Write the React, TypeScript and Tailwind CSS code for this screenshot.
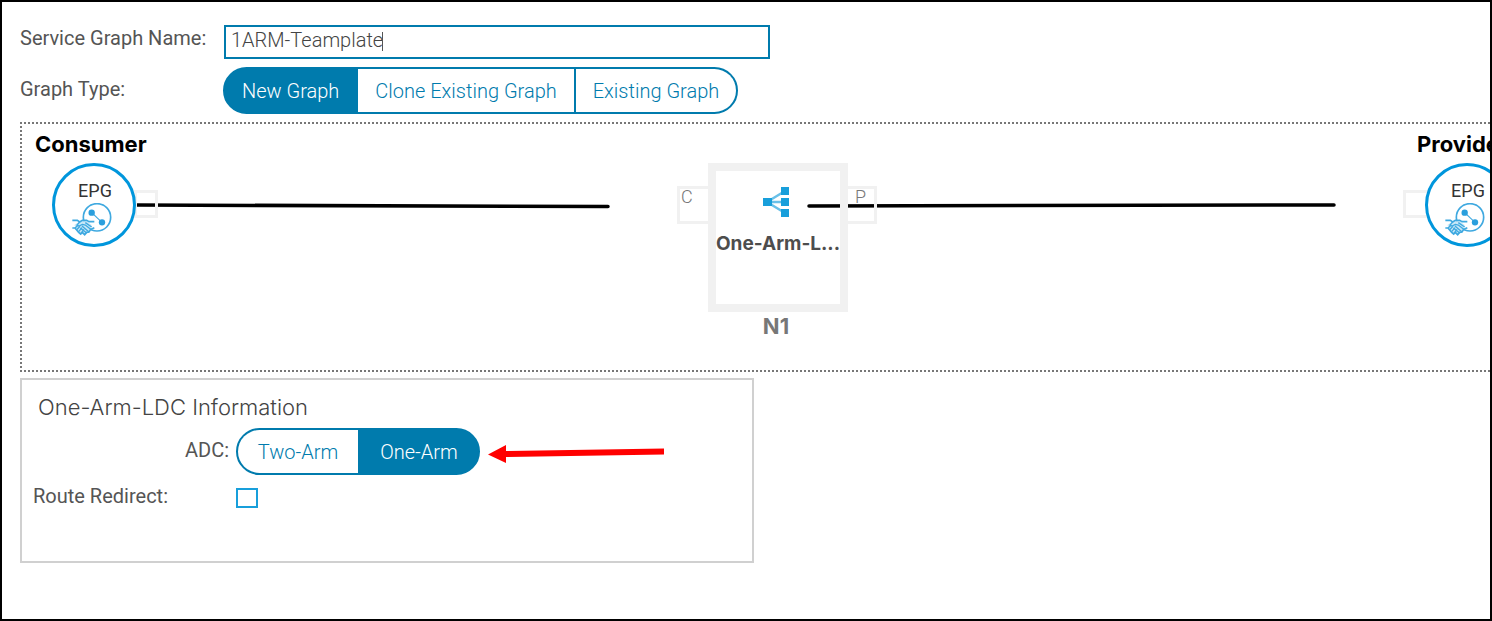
import { useState, type ReactNode } from "react";

function Segmented({
  label,
  options,
  initial,
}: {
  label: string;
  options: string[];
  initial: string;
}) {
  const [value, setValue] = useState(initial);
  return (
    <div
      role="group"
      aria-label={label}
      className="flex h-[47px] overflow-hidden rounded-full border-2 border-[#007bad] bg-[#007bad]"
    >
      {options.map((o, i) => (
        <button
          key={o}
          type="button"
          aria-pressed={value === o}
          onClick={() => setValue(o)}
          className={
            "min-w-[120px] px-[17px] text-xl font-light whitespace-nowrap " +
            (i > 0 ? "border-l-2 border-[#007bad] " : "") +
            (value === o ? "bg-[#007bad] text-white" : "bg-white text-[#007bad]")
          }
        >
          {o}
        </button>
      ))}
    </div>
  );
}

function EpgIcon() {
  return (
    <svg viewBox="80 141 123 99" className="mr-[5px] h-[33px] w-[41px]" fill="none" stroke="#3fa9e0">
      <circle cx="158" cy="184" r="41" strokeWidth="5" />
      <path d="M142 170 L173 199" strokeWidth="3.5" />
      <circle cx="142" cy="170" r="9.5" fill="#2a9fdd" stroke="none" />
      <circle cx="173" cy="199" r="9.5" fill="#2a9fdd" stroke="none" />
      <path
        d="M90 207 L106 196 L126 195 L142 207 L138 222 L120 236 L104 231 Z"
        fill="#c9e8f7"
        stroke="none"
      />
      <path d="M84 193 H99 L106 198 L114 193 H127 L134 197 H150" strokeWidth="5" />
      <path
        d="M84 216 H92 L103 229 L109 234 L114 229 L121 236 L127 229 L134 228 L139 220 L150 215"
        strokeWidth="5"
      />
      <path
        d="M106 198 L98 207 L104 210 L114 205 L123 207 L139 220 M92 216 L101 208 M97 221 L107 211 M103 227 L113 215 M110 232 L119 220 M113 210 L134 228 M108 216 L127 231 M123 200 L142 213"
        strokeWidth="4"
      />
    </svg>
  );
}

function Epg({ className }: { className: string }) {
  return (
    <div
      className={
        "absolute flex h-[84px] w-[84px] flex-col items-center rounded-full border-[3px] border-[#0096dc] bg-white pt-[13px] " +
        className
      }
    >
      <span className="pl-[2px] text-lg leading-6 text-[#333]">EPG</span>
      <EpgIcon />
    </div>
  );
}

function Port({ className, children }: { className: string; children?: ReactNode }) {
  return (
    <div
      className={
        "absolute border-[3px] border-[#f1f1f1] text-lg leading-4 font-light text-[#777] " +
        className
      }
    >
      {children}
    </div>
  );
}

function Graph() {
  return (
    <section
      aria-label="Service graph"
      className="relative mt-2 ml-[18px] h-[250px] overflow-hidden border-2 border-r-0 border-dotted border-[#777]"
    >
      <svg
        className="absolute top-0 left-0 h-[246px] w-[1470px]"
        stroke="#000"
        strokeWidth="3.5"
        strokeLinecap="round"
      >
        <line x1="114" y1="81" x2="586" y2="82.5" />
        <line x1="787" y1="82" x2="1312" y2="81" />
      </svg>

      <h2 className="absolute top-[6px] left-[13px] font-['Inter','Liberation_Sans',sans-serif] text-[22px] leading-7 font-bold text-black">
        Consumer
      </h2>
      <Port className="top-[66px] left-[112px] h-[28px] w-[24px]" />
      <Epg className="top-[39px] left-[30px]" />

      <Port className="top-[62px] left-[655px] h-[38px] w-[34px] pl-px">C</Port>
      <Port className="top-[62px] left-[823px] h-[38px] w-[32px] pl-[7px]">P</Port>
      <div className="absolute top-[39px] left-[686px] flex h-[149px] w-[140px] flex-col items-center border-8 border-[#f1f1f1] pt-[15px]">
        <svg viewBox="0 0 27 31" className="mr-[3px] h-[31px] w-[27px]" fill="#189fdb">
          <path
            d="M4 16 L22 5 M4 16 H22 M4 16 L22 27"
            stroke="#69c0e8"
            strokeWidth="2.5"
          />
          <rect x="0" y="12" width="9" height="8" />
          <rect x="18" y="1" width="8" height="8" />
          <rect x="18" y="12" width="8" height="8" />
          <rect x="18" y="23" width="8" height="8" />
        </svg>
        <span className="mt-[15px] font-['Inter','Liberation_Sans',sans-serif] text-[19px] leading-6 font-bold whitespace-nowrap text-[#4d4d4d]">
          One-Arm-L...
        </span>
      </div>
      <div className="absolute top-[188px] left-[686px] w-[136px] text-center font-['Inter','Liberation_Sans',sans-serif] text-[22px] leading-7 font-bold text-[#777]">
        N1
      </div>

      <h2 className="absolute top-[6px] left-[1395px] font-['Inter','Liberation_Sans',sans-serif] text-[22px] leading-7 font-bold text-black">
        Provider
      </h2>
      <Port className="top-[66px] left-[1381px] h-[28px] w-[28px]" />
      <Epg className="top-[39px] left-[1403px]" />
    </section>
  );
}

export default function App() {
  const [name, setName] = useState("1ARM-Teamplate");
  return (
    <main className="min-h-screen overflow-hidden border-2 border-black bg-white pt-[23px] font-['Roboto','Liberation_Sans',sans-serif] text-[#555]">
      <div className="flex items-start pl-[18px]">
        <label htmlFor="graph-name" className="w-[204px] text-xl leading-[26px]">
          Service Graph Name:
        </label>
        <div className="relative">
          <input
            id="graph-name"
            value={name}
            onChange={(e) => setName(e.target.value)}
            className="block h-[34px] w-[546px] border-2 border-[#007bad] px-[5px] pb-1 text-xl font-light text-[#444] outline-none"
          />
          <span className="absolute top-[7px] left-[158px] h-[19px] w-px bg-[#555]" />
        </div>
      </div>
      <div className="mt-2 flex items-center pl-[18px]">
        <span className="w-[203px] pb-1 text-xl leading-[26px]">Graph Type:</span>
        <Segmented
          label="Graph Type"
          options={["New Graph", "Clone Existing Graph", "Existing Graph"]}
          initial="New Graph"
        />
      </div>

      <Graph />

      <section className="mt-[6px] ml-[18px] h-[185px] w-[734px] border-2 border-[#d0d0d0] pt-[13px]">
        <h3 className="pl-4 font-['Inter','Liberation_Sans',sans-serif] text-[22px] leading-7 font-light text-[#444]">
          One-Arm-LDC Information
        </h3>
        <div className="mt-[7px] flex items-center">
          <span className="w-[214px] pr-[7px] pb-1 text-right text-xl leading-[26px]">ADC:</span>
          <Segmented label="ADC" options={["Two-Arm", "One-Arm"]} initial="One-Arm" />
          <svg
            viewBox="0 0 177 18"
            className="mt-1 ml-2 h-[18px] w-[177px] shrink-0"
            fill="#f00"
          >
            <path d="M0 9.5 L18 0 V6 L176 3.5 V9.5 L18 12 V18 Z" />
          </svg>
        </div>
        <div className="mt-2 flex items-center pl-[11px]">
          <label htmlFor="route-redirect" className="w-[203px] pb-1 text-xl leading-[26px]">
            Route Redirect:
          </label>
          <input
            id="route-redirect"
            type="checkbox"
            className="h-5 w-[22px] appearance-none border-2 border-[#189fdb] bg-white checked:bg-[#189fdb]"
          />
        </div>
      </section>
    </main>
  );
}
